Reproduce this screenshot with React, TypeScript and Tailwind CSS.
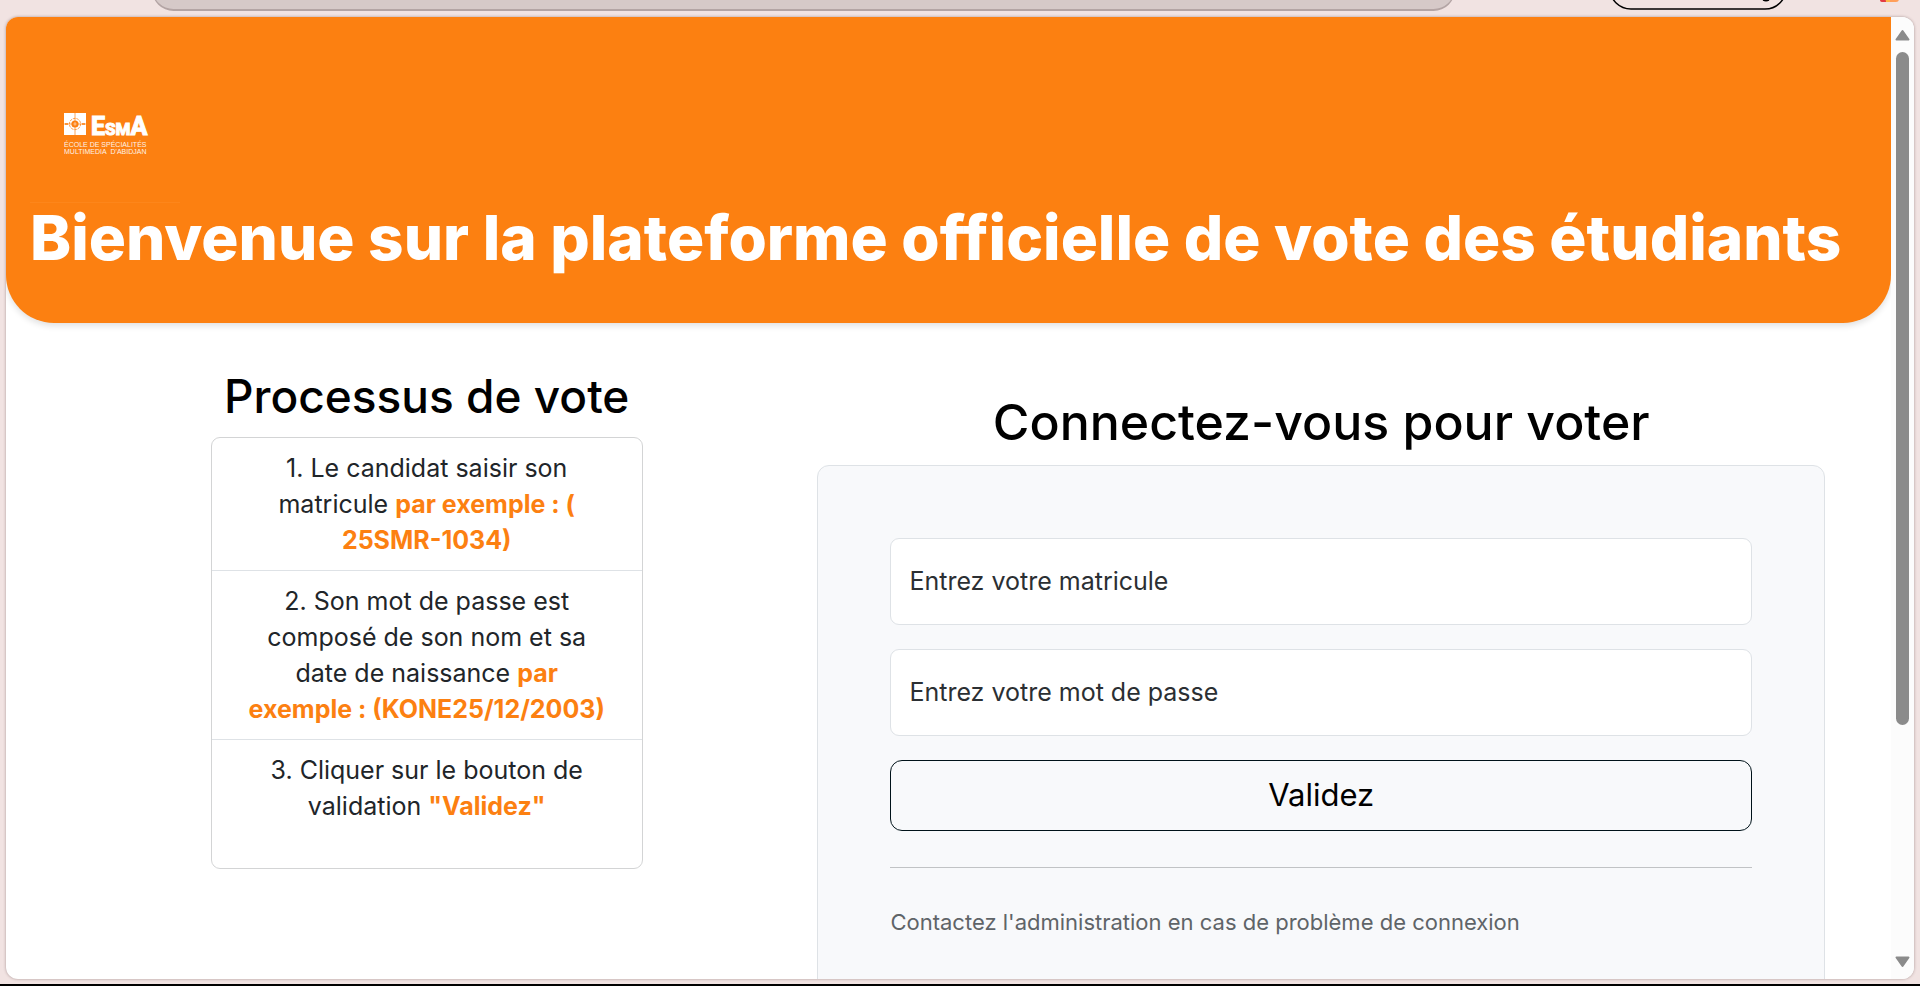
import type { ReactNode } from "react";

function BrowserToolbar() {
  return (
    <div className="flex h-[17px] shrink-0 items-start overflow-hidden pl-[152px]" aria-hidden="true">
      <div className="-mt-8 h-[43px] w-[1303px] rounded-[22px] border border-b-2 border-[#b3a4a4] bg-[#d6c9c8]" />
      <svg className="ml-[152px] shrink-0" width="300" height="17" viewBox="0 0 300 17">
        <rect x="3" y="-32" width="176" height="41" rx="21" fill="none" stroke="#000" strokeWidth="1.5" />
        <circle cx="159" cy="-3" r="4.5" fill="#000" />
        <rect x="273" y="-10" width="19" height="12" rx="3" fill="#ff9f5a" />
        <rect x="277" y="-10" width="6" height="12" fill="#ffb74a" />
        <path d="M273-10h4l2 12h-4a2 2 0 0 1-2-2z" fill="#e23a45" />
      </svg>
    </div>
  );
}

function Logo() {
  return (
    <svg width="150" height="150" viewBox="0 0 150 150" role="img" aria-label="EsmA">
      <path d="M0 149.5H150" stroke="#fd8c26" strokeWidth="1" opacity=".5" />
      <rect x="34" y="60" width="22" height="22" fill="#fff" />
      <g fill="none" stroke="#fc8011">
        <path d="M45 60v22M34 71h22" strokeWidth=".7" />
        <circle cx="45" cy="71" r="5.6" strokeWidth=".8" strokeDasharray="2.4 1" />
        <circle cx="45" cy="71" r="2.5" strokeWidth="2.2" />
        <path d="M35 71h3M52 71h3" strokeWidth="1.4" />
      </g>
      <g fill="#fff" stroke="#fff" strokeWidth="1" fontFamily="Roboto, 'Liberation Sans', sans-serif" fontWeight="800">
        <text x="61" y="81.5">
          <tspan fontSize="25">E</tspan>
          <tspan fontSize="17">SM</tspan>
          <tspan fontSize="25">A</tspan>
        </text>
      </g>
      <g fill="#fff" opacity=".9" fontFamily="'Liberation Sans', sans-serif" fontSize="7">
        <text x="34" y="94">ÉCOLE DE SPÉCIALITÉS</text>
        <text x="34" y="101">MULTIMEDIA&nbsp; D'ABIDJAN</text>
      </g>
    </svg>
  );
}

function Header() {
  return (
    <header className="rounded-b-[48px] bg-[#fc8011] px-6 pt-9 pb-[51px] shadow-[0_3px_6px_rgba(0,0,0,0.12)]">
      <Logo />
      <h1 className="text-[62px] leading-[69px] font-extrabold whitespace-nowrap text-white">
        Bienvenue sur la plateforme officielle de vote des étudiants
      </h1>
    </header>
  );
}

function Accent({ children }: { children: ReactNode }) {
  return <span className="font-bold text-[#fc8011]">{children}</span>;
}

function Steps() {
  return (
    <section className="col-span-5 flex flex-col items-center pt-11">
      <h2 className="text-[46px] leading-[58px] font-medium text-black">Processus de vote</h2>
      <ol className="mt-3 h-[432px] w-[432px] divide-y divide-[#dee2e6] rounded-[9px] border border-[#d3d4d5] bg-white text-center text-[25px] leading-9 text-[#212529]">
        <li className="py-3">
          1. Le candidat saisir son
          <br />
          matricule <Accent>par exemple : (</Accent>
          <br />
          <Accent>25SMR-1034)</Accent>
        </li>
        <li className="py-3">
          2. Son mot de passe est
          <br />
          composé de son nom et sa
          <br />
          date de naissance <Accent>par</Accent>
          <br />
          <Accent>exemple : (KONE25/12/2003)</Accent>
        </li>
        <li className="py-3">
          3. Cliquer sur le bouton de
          <br />
          validation <Accent>"Validez"</Accent>
        </li>
      </ol>
    </section>
  );
}

function Field({ id, label, type }: { id: string; label: string; type: string }) {
  return (
    <div className="mb-6 grid">
      <input
        id={id}
        type={type}
        className="col-start-1 row-start-1 h-[87px] w-full rounded-[9px] border border-[#dee2e6] bg-white px-[18px] text-[25px] text-[#212529]"
      />
      <label
        htmlFor={id}
        className="pointer-events-none col-start-1 row-start-1 self-center justify-self-start px-[19px] pb-[2px] text-[25px] leading-9 text-[#2b2f33]"
      >
        {label}
      </label>
    </div>
  );
}

function Login() {
  return (
    <section className="col-span-7 px-[18px] pt-[70px]">
      <h2 className="text-center text-[50px] leading-[58px] font-medium text-black">Connectez-vous pour voter</h2>
      <form className="mt-[14px] rounded-xl border border-[#dee2e6] bg-[#f8f9fb] p-[72px]">
        <Field id="matricule" label="Entrez votre matricule" type="text" />
        <Field id="password" label="Entrez votre mot de passe" type="password" />
        <button type="button" className="h-[71px] w-full rounded-xl border border-[#001219] text-[31px] text-black">
          Validez
        </button>
        <hr className="my-9 border-[#c1c3c5]" />
        <p className="text-[22px] leading-9 text-[#5f6468]">
          Contactez l'administration en cas de problème de connexion
        </p>
      </form>
    </section>
  );
}

function Scrollbar() {
  return (
    <div className="flex w-[23px] shrink-0 flex-col items-center bg-[#fcfcfc] pt-3 pb-[11px]" aria-hidden="true">
      <svg width="15" height="12" viewBox="0 0 15 12">
        <path d="M7.5 2 13.5 10.5H1.5Z" fill="#8b8b8b" stroke="#8b8b8b" strokeWidth="2" strokeLinejoin="round" />
      </svg>
      <div className="mt-[11px] min-h-0 flex-1">
        <div className="h-[74.5%] w-[13px] rounded-full bg-[#8b8b8b]" />
      </div>
      <svg width="15" height="12" viewBox="0 0 15 12">
        <path d="M7.5 10 13.5 1.5H1.5Z" fill="#8b8b8b" stroke="#8b8b8b" strokeWidth="2" strokeLinejoin="round" />
      </svg>
    </div>
  );
}

export default function App() {
  return (
    <div className="flex h-screen flex-col border-b-2 border-black bg-[#f1e3e2] pb-[5px] font-['Inter',sans-serif]">
      <BrowserToolbar />
      <div className="mx-[6px] flex min-h-0 flex-1 overflow-hidden rounded-xl bg-white shadow-[0_0_3px_rgba(80,50,50,0.45)]">
        <main className="min-w-0 flex-1 overflow-hidden">
          <Header />
          <div className="grid grid-cols-12 px-12">
            <Steps />
            <Login />
          </div>
        </main>
        <Scrollbar />
      </div>
    </div>
  );
}
